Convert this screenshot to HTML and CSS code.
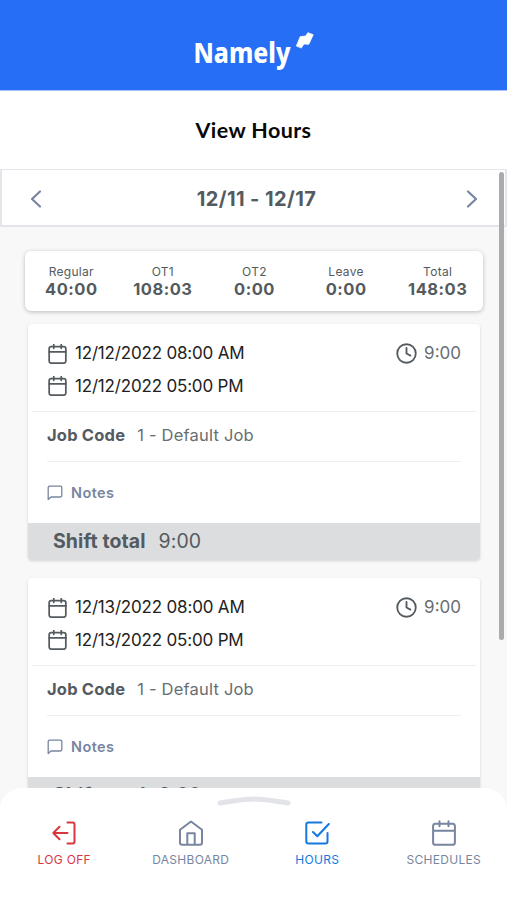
FILE: index.html
```html
<!DOCTYPE html>
<html lang="en">
  <head>
    <meta charset="UTF-8" />
    <meta name="viewport" content="width=device-width, initial-scale=1" />
    <title>View Hours</title>
    <link rel="stylesheet" href="styles.css">
  </head>
  <body>
    <!-- shared icons -->
    <svg class="sprite" width="0" height="0">
      <symbol id="calendar" viewBox="0 0 24 24">
        <rect x="2" y="3" width="20" height="20" rx="2.5" />
        <path d="M2 9.5h20M7.5 0.8v4.4M16.5 0.8v4.4" />
      </symbol>
      <symbol id="clock" viewBox="0 0 24 24">
        <circle cx="12" cy="12" r="10.6" />
        <path d="M12 5.5V12l4.5 2.4" />
      </symbol>
      <symbol id="note" viewBox="0 0 16 16">
        <path d="M1.2 14.6V2.6Q1.2 1.2 2.6 1.2H13.4Q14.8 1.2 14.8 2.6V10.6Q14.8 12 13.4 12H4Z" />
      </symbol>
    </svg>

    <div class="app">
      <header class="header">
        <svg class="logo" width="124" height="44" viewBox="0 0 124 44">
          <text x="1.5" y="35.3" textLength="97" lengthAdjust="spacingAndGlyphs">Namely</text>
          <path d="M104.5 17.7L108.2 8.7L113.8 8L115.8 4.7L121.2 6.7L116.8 16.3L111.8 16L109.5 19.7Z" />
        </svg>
      </header>
      <h1 class="title">View Hours</h1>
      <div class="range">
        <svg class="arrow" width="12" height="20" viewBox="0 0 12 20"><path d="M10 2.5L2 10l8 7.5" /></svg>
        <span>12/11 - 12/17</span>
        <svg class="arrow" width="12" height="20" viewBox="0 0 12 20"><path d="M2 2.5L10 10l-8 7.5" /></svg>
      </div>

      <main class="content">
        <div class="summary">
          <div class="stat"><span>Regular</span><b>40:00</b></div>
          <div class="stat"><span>OT1</span><b>108:03</b></div>
          <div class="stat"><span>OT2</span><b>0:00</b></div>
          <div class="stat"><span>Leave</span><b>0:00</b></div>
          <div class="stat"><span>Total</span><b>148:03</b></div>
        </div>

        <section class="card">
          <div class="times">
            <div class="dates">
              <div class="date"><svg class="icon"><use href="#calendar" /></svg>12/12/2022 08:00 AM</div>
              <div class="date"><svg class="icon"><use href="#calendar" /></svg>12/12/2022 05:00 PM</div>
            </div>
            <div class="hours"><svg class="icon"><use href="#clock" /></svg>9:00</div>
          </div>
          <div class="job"><b>Job Code</b><span>1 - Default Job</span></div>
          <div class="notes"><svg class="note-icon"><use href="#note" /></svg>Notes</div>
          <div class="total"><b>Shift total</b><span>9:00</span></div>
        </section>

        <section class="card">
          <div class="times">
            <div class="dates">
              <div class="date"><svg class="icon"><use href="#calendar" /></svg>12/13/2022 08:00 AM</div>
              <div class="date"><svg class="icon"><use href="#calendar" /></svg>12/13/2022 05:00 PM</div>
            </div>
            <div class="hours"><svg class="icon"><use href="#clock" /></svg>9:00</div>
          </div>
          <div class="job"><b>Job Code</b><span>1 - Default Job</span></div>
          <div class="notes"><svg class="note-icon"><use href="#note" /></svg>Notes</div>
          <div class="total"><b>Shift total</b><span>9:00</span></div>
        </section>
      </main>

      <div class="scrollbar"></div>

      <nav class="tabs">
        <svg class="handle" width="76" height="12" viewBox="0 0 76 12"><path d="M4 8C25 5 28 4 38 4S51 5 72 8" /></svg>
        <a class="tab logoff">
          <svg width="26" height="26" viewBox="0 0 26 26"><path d="M16.5 2.5H21.5Q23.5 2.5 23.5 4.5V21.5Q23.5 23.5 21.5 23.5H16.5M16.5 13H2.5M8.5 6.8L2.3 13l6.2 6.2" /></svg>
          LOG OFF
        </a>
        <a class="tab">
          <svg width="26" height="26" viewBox="0 0 26 26"><path d="M2 9.8L13 1.5l11 8.3V22.5Q24 24.8 21.7 24.8H4.3Q2 24.8 2 22.5ZM9.3 24.8V13.3H16.7V24.8" /></svg>
          DASHBOARD
        </a>
        <a class="tab active">
          <svg width="26" height="26" viewBox="0 0 26 26"><path d="M17.5 2.5H4.5Q2.3 2.5 2.3 4.7V21.3Q2.3 23.5 4.5 23.5H21.3Q23.5 23.5 23.5 21.3V13M9 12l4.3 4.3L24.8 4" /></svg>
          HOURS
        </a>
        <a class="tab">
          <svg width="26" height="26" viewBox="0 0 26 26"><path d="M4.5 3.8H21.5Q23.9 3.8 23.9 6.2V22.4Q23.9 24.8 21.5 24.8H4.5Q2.1 24.8 2.1 22.4V6.2Q2.1 3.8 4.5 3.8ZM2.1 10.8H23.9M8.5 1.2v5M17.5 1.2v5" /></svg>
          SCHEDULES
        </a>
      </nav>
    </div>
  </body>
</html>
```
FILE: styles.css
```css
:root {
  --blue: #266ef6;
  --text: #545b60;
  --muted: #7885a0;
  --line: #eceeef;
  --font: Inter, "Liberation Sans", sans-serif;
}
* {
  box-sizing: border-box;
}
body {
  margin: 0;
  font-family: var(--font);
  color: var(--text);
  background: #f8f8f8;
}
svg {
  fill: none;
  stroke: currentColor;
  stroke-linecap: round;
  stroke-linejoin: round;
  flex-shrink: 0;
}
.sprite {
  position: absolute;
}
.app {
  position: relative;
  display: flex;
  flex-direction: column;
  height: 900px;
  overflow: hidden;
}
.header {
  height: 91px;
  flex-shrink: 0;
  display: flex;
  justify-content: center;
  padding-top: 28px;
  background: var(--blue);
  border-bottom: 1px solid #a8c5fb;
}
.logo {
  fill: #fff;
  stroke: none;
  font-family: "Noto Sans", sans-serif;
  font-weight: 800;
  font-size: 27.5px;
}
.logo path {
  stroke: #fff;
  stroke-width: 0.8;
}
.title {
  margin: 0;
  height: 78px;
  flex-shrink: 0;
  background: #fff;
  color: #080808;
  text-align: center;
  font-family: Lato, sans-serif;
  font-size: 21.5px;
  font-weight: 700;
  line-height: 78px;
  letter-spacing: 0.4px;
}
.range {
  height: 58px;
  flex-shrink: 0;
  display: flex;
  align-items: center;
  justify-content: space-between;
  padding: 2px 27px 0 28px;
  background: #fff;
  border: 2px solid #e4e5eb;
  border-top-width: 1px;
  font-size: 20px;
  font-weight: 700;
  letter-spacing: 0.4px;
}
.range span {
  padding-left: 5px;
}
.arrow {
  color: var(--muted);
  stroke-width: 2.2;
}
.content {
  flex: 1;
  min-height: 0;
  overflow: hidden;
  padding: 24px 24px 0 25px;
}
.summary {
  display: flex;
  height: 60px;
  margin-bottom: 13px;
  background: #fff;
  border-radius: 6px;
  box-shadow: 0 1px 4px rgba(0, 0, 0, 0.25);
}
.stat {
  flex: 1;
  display: flex;
  flex-direction: column;
  align-items: center;
  padding: 13px 0 0 1px;
  font-size: 12px;
  line-height: 15px;
  letter-spacing: 0.3px;
}
.stat b {
  font-size: 16.5px;
  font-weight: 700;
  line-height: 21px;
  letter-spacing: 0.5px;
}
.card {
  height: 236px;
  margin: 0 3px 18px;
  background: #fff;
  border-radius: 4px;
  box-shadow: 0 1px 3px rgba(0, 0, 0, 0.15);
  overflow: hidden;
}
.times {
  display: flex;
  justify-content: space-between;
  height: 88px;
  margin: 0 4px;
  padding: 13px 15px 0;
  border-bottom: 1px solid var(--line);
}
.date,
.hours {
  display: flex;
  align-items: center;
  gap: 7px;
  height: 32.5px;
  font-size: 17px;
}
.date {
  color: #222;
  letter-spacing: -0.18px;
}
.icon {
  width: 21px;
  height: 21px;
  color: var(--text);
  stroke-width: 2.1;
}
.date .icon {
  padding-top: 1px;
}
.hours,
.job span {
  color: #686e72;
}
.job {
  display: flex;
  align-items: center;
  gap: 12px;
  height: 50px;
  margin: 0 19px;
  padding-bottom: 4px;
  border-bottom: 1px solid var(--line);
  font-size: 16.5px;
  letter-spacing: 0.2px;
}
.job b,
.total b {
  font-weight: 700;
}
.notes {
  display: flex;
  align-items: center;
  gap: 8px;
  height: 61px;
  padding-left: 19px;
  color: var(--muted);
  font-size: 14.5px;
  font-weight: 600;
  letter-spacing: 0.4px;
}
.note-icon {
  width: 16px;
  height: 16px;
  stroke-width: 1.3;
}
.total {
  display: flex;
  align-items: center;
  gap: 13px;
  height: 37px;
  padding: 0 0 2px 25px;
  background: #dbdddf;
  font-size: 19.5px;
  letter-spacing: 0.08px;
}
.scrollbar {
  position: absolute;
  top: 172px;
  left: 499px;
  width: 5px;
  height: 468px;
  border-radius: 3px;
  background: #aaabad;
}
.tabs {
  position: absolute;
  left: 0;
  right: 0;
  bottom: 0;
  display: flex;
  height: 112px;
  padding: 32px 0 0 1px;
  background: #fff;
  border-radius: 22px 22px 0 0;
}
.handle {
  position: absolute;
  top: 7px;
  left: 216px;
  color: #e2e4e9;
  stroke-width: 5;
}
.tab {
  flex: 1;
  display: flex;
  flex-direction: column;
  align-items: center;
  gap: 6px;
  color: var(--muted);
  stroke-width: 2;
  font-size: 12px;
  line-height: 16px;
  letter-spacing: 0.3px;
}
.logoff {
  color: #d9373f;
}
.active {
  color: #1479df;
}
```
